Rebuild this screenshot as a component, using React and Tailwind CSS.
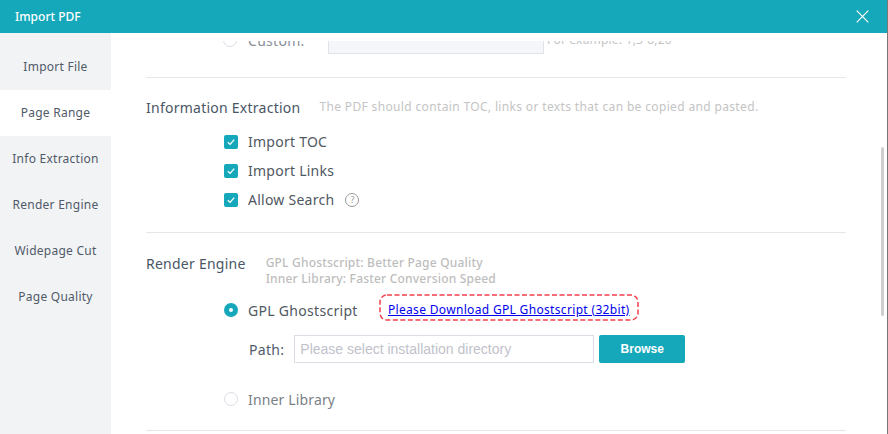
import React from "react";

const font = { fontFamily: '"Noto Sans", "Open Sans", sans-serif' };

function Check({ label, children }) {
  return (
    <div className="flex items-center h-[29px]">
      <span className="flex items-center justify-center w-[14px] h-[14px] rounded-[2px] bg-[#15a8bb]">
        <svg width="10" height="10" viewBox="0 0 10 10" fill="none" stroke="white" strokeWidth="1.3">
          <path d="M1.8 5.2 4.1 7.4 8.2 2.6" />
        </svg>
      </span>
      <span className="ml-[10px] text-[14px] tracking-[0.25px] text-[#505862]">{label}</span>
      {children}
    </div>
  );
}

export default function App() {
  const tabs = ["Import File", "Page Range", "Info Extraction", "Render Engine", "Widepage Cut", "Page Quality"];
  return (
    <div style={font} className="relative w-[888px] h-[434px] flex flex-col overflow-hidden bg-white border-r border-[#777]">
      <div className="absolute right-[-1px] top-[277px] bottom-0 w-[1px] bg-[#2f6a6a]" />
      <div className="h-[33px] shrink-0 bg-[#15a8bb] flex items-center justify-between pl-[15px] pr-[18px]">
        <span className="text-white text-[12px] font-medium">Import PDF</span>
        <svg width="13" height="13" viewBox="0 0 13 13" stroke="white" strokeWidth="1.2" fill="none">
          <path d="M.7.7 12.3 12.3M12.3.7.7 12.3" />
        </svg>
      </div>
      <div className="flex-1 flex min-h-0">
        <div className="w-[111px] shrink-0 bg-[#f2f3f5] pt-[11px]">
          {tabs.map((t, i) => (
            <div
              key={t}
              className={`h-[46px] flex items-center justify-center text-[12px] tracking-[0.25px] text-[#505a68] ${i === 1 ? "bg-white" : ""}`}
            >
              {t}
            </div>
          ))}
        </div>
        <div className="flex-1 min-w-0 overflow-hidden flex relative">
          <div className="absolute left-0 right-0 top-0 h-[8px] bg-white z-10" />
          <div className="w-[700px] ml-[35px] -mt-[18px] shrink-0">
            <div className="flex items-center h-[50px]">
              <span className="ml-[77px] w-[14px] h-[14px] rounded-full border border-[#dcdee6] bg-white" />
              <span className="ml-[11px] w-[75px] text-[14px] tracking-[0.3px] text-[#8b9099]">Custom:</span>
              <span className="ml-[5px] mt-[-1px] w-[216px] h-[28px] bg-[#f5f6f9] border border-[#e2e3ea]" />
              <span className="ml-[3px] text-[12px] tracking-[0.2px] text-[#c4c4c4]">For example: 1,3-8,20</span>
            </div>
            <div className="mt-[12px] border-t border-[#e6e6e6]" />
            <div className="flex items-center h-[30px] mt-[14px]">
              <span className="text-[14px] tracking-[0.25px] text-[#4a5666]">Information Extraction</span>
              <span className="ml-[19px] text-[12px] tracking-[0.35px] text-[#c4c4c4]">The PDF should contain TOC, links or texts that can be copied and pasted.</span>
            </div>
            <div className="ml-[78px] mt-[5px]">
              <Check label="Import TOC" />
              <Check label="Import Links" />
              <Check label="Allow Search">
                <span className="ml-[11px] w-[14px] h-[14px] rounded-full border border-[#999] text-[9px] leading-[12px] text-center text-[#999]">?</span>
              </Check>
            </div>
            <div className="mt-[18px] border-t border-[#e6e6e6]" />
            <div className="flex mt-[21px]">
              <span className="text-[14px] tracking-[0.25px] text-[#4a5666] leading-[20px]">Render Engine</span>
              <div className="ml-[20px] mt-[1px] text-[12px] tracking-[0.2px] font-medium text-[#bdbdbd] leading-[16px]">
                <div>GPL Ghostscript: Better Page Quality</div>
                <div>Inner Library: Faster Conversion Speed</div>
              </div>
            </div>
            <div className="flex items-center ml-[78px] mt-[9px] h-[28px]">
              <span className="w-[14px] h-[14px] rounded-full bg-[#15a8bb] flex items-center justify-center">
                <span className="w-[4px] h-[4px] rounded-full bg-white" />
              </span>
              <span className="ml-[10px] text-[14px] tracking-[0.3px] text-[#505862]">GPL Ghostscript</span>
              <span className="relative ml-[21px] mb-[5px] w-[260px] h-[27px] flex items-center justify-center">
                <svg className="absolute inset-0" width="260" height="27" fill="none">
                  <rect x="1" y="1" width="258" height="25" rx="7" stroke="#f4404c" strokeWidth="1.5" strokeDasharray="5 2.5" />
                </svg>
                <a href="#" className="mt-[4px] text-[12px] tracking-[0.33px] text-[#0000ee] underline">Please Download GPL Ghostscript (32bit)</a>
              </span>
            </div>
            <div className="flex items-center ml-[103px] mt-[11px]">
              <span className="text-[14px] tracking-[0.3px] text-[#4f5b6b]">Path:</span>
              <span
                style={{ fontFamily: '"Liberation Sans", Arial, sans-serif' }}
                className="ml-[10px] w-[300px] h-[28px] border border-[#dcdee6] flex items-center pl-[5px] text-[14px] text-[#bfc2cb]"
              >
                Please select installation directory
              </span>
              <span
                style={{ fontFamily: '"Liberation Sans", Arial, sans-serif' }}
                className="ml-[5px] w-[86px] h-[28px] rounded-[2px] bg-[#15a8bb] text-white text-[12px] font-bold flex items-center justify-center"
              >
                Browse
              </span>
            </div>
            <div className="flex items-center ml-[78px] mt-[21px] h-[30px]">
              <span className="w-[14px] h-[14px] rounded-full border border-[#dcdee6]" />
              <span className="ml-[10px] text-[14px] tracking-[0.15px] text-[#7b7f86]">Inner Library</span>
            </div>
            <div className="mt-[16px] border-t border-[#e6e6e6]" />
          </div>
          <div className="absolute left-[770px] top-[114px] w-[3px] h-[169px] rounded-full bg-[#cfcfcf]" />
        </div>
      </div>
    </div>
  );
}
